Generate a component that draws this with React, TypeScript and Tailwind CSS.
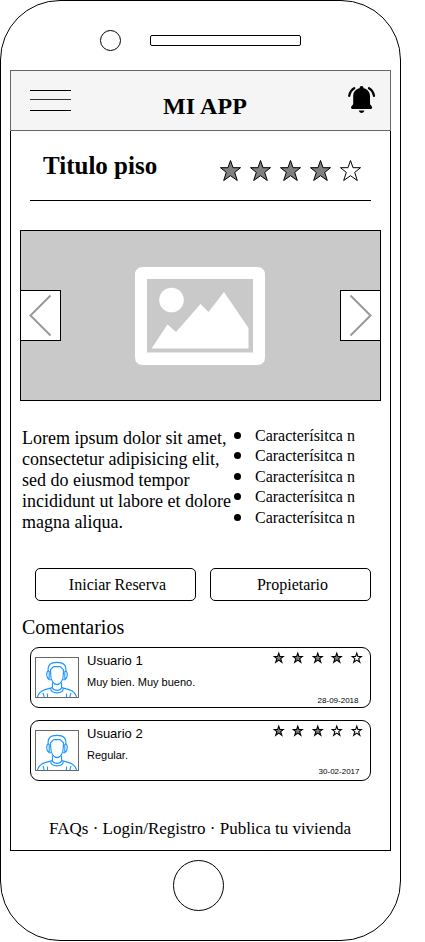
const SERIF = "font-['Liberation_Serif',serif]";
const SANS = "font-['Liberation_Sans',sans-serif]";

function Star({ filled, size, stroke }: { filled: boolean; size: number; stroke: number }) {
  return (
    <svg width={size} height={size} viewBox="0.5 0.5 22 22" className="block shrink-0 overflow-visible">
      <path
        d="M11 1 L13.5 8.2 H21 L15.2 12.9 L17.8 21 L11 16.2 L4.2 21 L6.8 12.9 L1 8.2 H8.5 Z"
        fill={filled ? "#808080" : "#fff"}
        stroke="#000"
        strokeWidth={stroke}
        strokeMiterlimit={10}
      />
    </svg>
  );
}

function Bell() {
  return (
    <svg width="30" height="30" viewBox="0.4 0 30 30" className="block overflow-visible">
      <path
        d="M15 2 C16.3 2 16.9 2.9 16.9 4.3 C20.9 5 23.4 8 23.4 12.2 V19.5 C23.4 21.3 25.6 22 25.6 23.6 Q25.6 24.9 24.3 24.9 H5.7 Q4.4 24.9 4.4 23.6 C4.4 22 6.6 21.3 6.6 19.5 V12.2 C6.6 8 9.1 5 13.1 4.3 C13.1 2.9 13.7 2 15 2 Z"
        fill="#000"
      />
      <path d="M12.2 26.6 H17.8 C17.4 28.2 16.4 28.9 15 28.9 C13.6 28.9 12.6 28.2 12.2 26.6 Z" fill="#000" />
      <path d="M7.6 4.2 C4.9 5.9 3.2 8.4 2.6 11.8 M22.4 4.2 C25.1 5.9 26.8 8.4 27.4 11.8" fill="none" stroke="#000" strokeWidth="2.3" strokeLinecap="round" />
    </svg>
  );
}

function Avatar() {
  return (
    <div className="h-[41px] w-[44px] shrink-0 border border-[#666]">
      <svg width="42" height="39" viewBox="1 1 42 39" className="block" fill="none" stroke="#1e96ff" strokeWidth="1.1">
        <path d="M13.2 14.5 C12.4 8 15.5 5.4 22 5.4 C28.5 5.4 31.6 8 30.8 14.5" />
        <path d="M15.6 17 V12.5 C17.3 12 17.5 9.8 19 9.6 H25 C26.5 9.8 26.7 12 28.4 12.5 V17" />
        <path d="M15.6 16 C15.5 23 18.5 27.6 22 27.6 C25.5 27.6 28.5 23 28.4 16" />
        <path d="M13.8 13.5 C11 14.5 11 20.5 14 22.6 L16 22.8 M30.2 13.5 C33 14.5 33 20.5 30 22.6 L28 22.8 M14.2 14 V22 M29.8 14 V22" />
        <path d="M17.4 25.5 V31 M26.6 25.5 V31 M17.4 31 C19 34.2 25 34.2 26.6 31" />
        <path d="M15.6 31.2 C16 37.4 28 37.4 28.4 31.2" />
        <path d="M17.4 30.6 L10 32.6 C5.5 34 3.4 36.6 2.4 40 M26.6 30.6 L34 32.6 C38.5 34 40.6 36.6 41.6 40" />
        <path d="M8 36 L9.2 40 M36 36 L34.8 40 M12.5 36.5 V40 M31.5 36.5 V40" />
      </svg>
    </div>
  );
}

type CommentProps = { user: string; text: string; date: string; rating: number; dateClass: string };

function Comment({ user, text, date, rating, dateClass }: CommentProps) {
  return (
    <article className={`${SANS} flex h-[61px] w-[341px] rounded-[9px] border border-black pl-1 pt-[9px]`}>
      <Avatar />
      <div className="ml-2 -mt-[4px] flex-1">
        <h3 className="text-[13px] leading-[15px]">{user}</h3>
        <p className="mt-[8px] text-[11px] leading-[13px]">{text}</p>
      </div>
      <div className="-mt-[5px] mr-[8px] flex flex-col items-end justify-between">
        <div className="mr-[0.5px] mt-[0.5px] flex gap-[9.5px]">
          {[0, 1, 2, 3, 4].map((i) => (
            <Star key={i} filled={i < rating} size={10} stroke={2.4} />
          ))}
        </div>
        <time className={`text-[8px] leading-[9px] ${dateClass}`}>{date}</time>
      </div>
    </article>
  );
}

function Arrow({ right = false }: { right?: boolean }) {
  return (
    <button className={`h-[51px] w-[41px] border border-black bg-white ${right ? "-mr-px" : "-ml-px"}`}>
      <svg width="39" height="49" viewBox="0 0 39 49" className="block" fill="none" stroke="#999" strokeWidth="2">
        <path d={right ? "M9.5 4.5 L29.5 24.5 L9.5 44.5" : "M29.5 4.5 L9.5 24.5 L29.5 44.5"} />
      </svg>
    </button>
  );
}

export default function App() {
  return (
    <div className={`${SERIF} h-[942px] w-[425px] overflow-hidden bg-white text-black`}>
      <div className="h-[941px] w-[401px] rounded-[60px] border border-black pl-[9px]">
        <div className="flex h-[69px] items-start pl-[90px] pt-[29px]">
          <div className="size-[21px] rounded-full border border-black" />
          <div className="ml-[29px] mt-[5px] h-[11px] w-[151px] rounded-[2px] border border-black" />
        </div>

        <header className="flex h-[61px] w-[381px] items-start border border-[#666] bg-[#f5f5f5] pl-[19px]">
          <div className="mt-[19px] w-[41px]">
            <div className="h-px bg-black" />
            <div className="mt-[8px] h-px bg-[#333]" />
            <div className="mt-[10px] h-px bg-black" />
          </div>
          <h1 className="ml-[92px] mt-[22px] w-[184px] text-[24px] font-bold leading-[27px] tracking-[0.1px]">MI APP</h1>
          <div className="mt-[13px]">
            <Bell />
          </div>
        </header>

        <main className="h-[720px] w-[381px] border-x border-b border-black">
          <div className="ml-[19px] flex h-[70px] w-[341px] items-start justify-between border-b border-black pl-[13px] pr-[9px]">
            <h2 className="mt-[20px] text-[25px] font-bold leading-[29px]">Titulo piso</h2>
            <div className="mt-[29px] flex gap-2">
              {[0, 1, 2, 3, 4].map((i) => (
                <Star key={i} filled={i < 4} size={22} stroke={1} />
              ))}
            </div>
          </div>

          <div className="ml-[9px] mt-[29px] flex h-[171px] w-[361px] items-center justify-between border border-black bg-[#c9c9c9]">
            <Arrow />
            <svg width="130" height="98" viewBox="0 0 130 98" className="mr-[2px] block">
              <path
                fillRule="evenodd"
                fill="#fff"
                d="M8 0 H122 Q130 0 130 8 V90 Q130 98 122 98 H8 Q0 98 0 90 V8 Q0 0 8 0 Z M12 12 V85.5 H118 V12 Z"
              />
              <circle cx="36.5" cy="33" r="12.3" fill="#fff" />
              <path fill="#fff" d="M16.5 81.5 L32.5 57.5 L41 65 L65.5 37 L73.5 45 L89 25 L113.5 61 V81.5 Z" />
            </svg>
            <Arrow right />
          </div>

          <div className="ml-[11px] flex h-[167px] pt-[27px]">
            <p className="w-[212px] whitespace-pre-line text-[18px] leading-[21px]">
              {"Lorem ipsum dolor sit amet,\nconsectetur adipisicing elit,\nsed do eiusmod tempor\nincididunt ut labore et dolore\nmagna aliqua."}
            </p>
            <ul className="-mt-[2.5px] text-[16px] leading-[20.5px]">
              {[1, 2, 3, 4, 5].map((n) => (
                <li key={n} className="flex items-center">
                  <span className="mb-[1px] mr-[14px] size-[7px] rounded-full bg-black" />
                  Caracterísitca n
                </li>
              ))}
            </ul>
          </div>

          <div className="ml-[24px] flex gap-[14px] text-[16px]">
            <button className="h-[33px] w-[161px] rounded-[5px] border border-black pl-[4px]">Iniciar Reserva</button>
            <button className="h-[33px] w-[161px] rounded-[5px] border border-black pl-[4px]">Propietario</button>
          </div>

          <h2 className="ml-[11px] mt-[15px] h-[31px] text-[20px] leading-[23px]">Comentarios</h2>

          <section className="ml-[19px] flex flex-col gap-[12px]">
            <Comment user="Usuario 1" text="Muy bien. Muy bueno." date="28-09-2018" rating={4} dateClass="mr-[3.5px] mb-[2px]" />
            <Comment user="Usuario 2" text="Regular." date="30-02-2017" rating={3} dateClass="mr-[2.5px] mb-[4px]" />
          </section>

          <footer className="mt-[38px] pr-[1px] text-center text-[17px] leading-[20px]">FAQs · Login/Registro · Publica tu vivienda</footer>
        </main>

        <div className="ml-[163px] mt-[9px] size-[51px] rounded-full border border-black" />
      </div>
    </div>
  );
}
